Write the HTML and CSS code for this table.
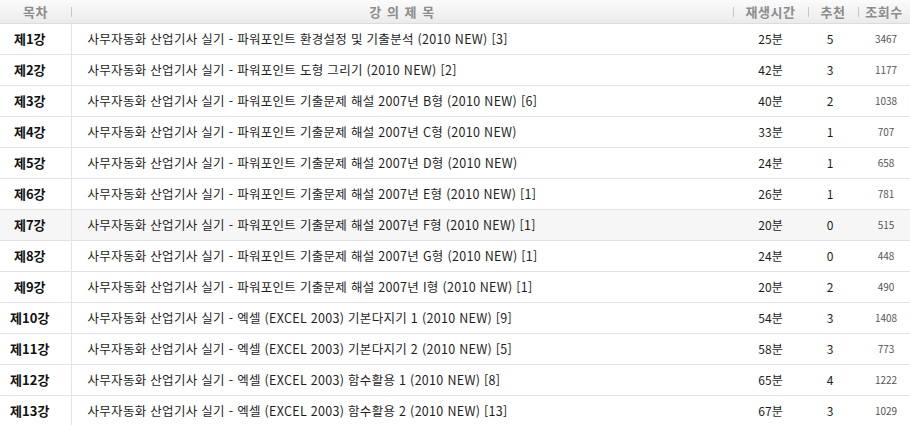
FILE: index.html
```html
<!DOCTYPE html>
<html lang="ko">
<head>
<meta charset="utf-8">
<link rel="stylesheet" href="styles.css">
</head>
<body>
<table class="list">
  <colgroup>
    <col class="c-no"><col class="c-title"><col class="c-time"><col class="c-rec"><col class="c-view">
  </colgroup>
  <thead>
    <tr>
      <th class="h-no">목차</th>
      <th class="h-sep">강 의 제 목</th>
      <th class="h-sep">재생시간</th>
      <th class="h-sep">추천</th>
      <th class="h-sep">조회수</th>
    </tr>
  </thead>
  <tbody>
    <tr><td class="no">제1강</td><td class="title">사무자동화 산업기사 실기 - 파워포인트 환경설정 및 기출분석 (2010 NEW) [3]</td><td class="time">25분</td><td class="rec">5</td><td class="view">3467</td></tr>
    <tr><td class="no">제2강</td><td class="title">사무자동화 산업기사 실기 - 파워포인트 도형 그리기 (2010 NEW) [2]</td><td class="time">42분</td><td class="rec">3</td><td class="view">1177</td></tr>
    <tr><td class="no">제3강</td><td class="title">사무자동화 산업기사 실기 - 파워포인트 기출문제 해설 2007년 B형 (2010 NEW) [6]</td><td class="time">40분</td><td class="rec">2</td><td class="view">1038</td></tr>
    <tr><td class="no">제4강</td><td class="title">사무자동화 산업기사 실기 - 파워포인트 기출문제 해설 2007년 C형 (2010 NEW)</td><td class="time">33분</td><td class="rec">1</td><td class="view">707</td></tr>
    <tr><td class="no">제5강</td><td class="title">사무자동화 산업기사 실기 - 파워포인트 기출문제 해설 2007년 D형 (2010 NEW)</td><td class="time">24분</td><td class="rec">1</td><td class="view">658</td></tr>
    <tr><td class="no">제6강</td><td class="title">사무자동화 산업기사 실기 - 파워포인트 기출문제 해설 2007년 E형 (2010 NEW) [1]</td><td class="time">26분</td><td class="rec">1</td><td class="view">781</td></tr>
    <tr class="hl"><td class="no">제7강</td><td class="title">사무자동화 산업기사 실기 - 파워포인트 기출문제 해설 2007년 F형 (2010 NEW) [1]</td><td class="time">20분</td><td class="rec">0</td><td class="view">515</td></tr>
    <tr><td class="no">제8강</td><td class="title">사무자동화 산업기사 실기 - 파워포인트 기출문제 해설 2007년 G형 (2010 NEW) [1]</td><td class="time">24분</td><td class="rec">0</td><td class="view">448</td></tr>
    <tr><td class="no">제9강</td><td class="title">사무자동화 산업기사 실기 - 파워포인트 기출문제 해설 2007년 I형 (2010 NEW) [1]</td><td class="time">20분</td><td class="rec">2</td><td class="view">490</td></tr>
    <tr><td class="no">제10강</td><td class="title">사무자동화 산업기사 실기 - 엑셀 (EXCEL 2003) 기본다지기 1 (2010 NEW) [9]</td><td class="time">54분</td><td class="rec">3</td><td class="view">1408</td></tr>
    <tr><td class="no">제11강</td><td class="title">사무자동화 산업기사 실기 - 엑셀 (EXCEL 2003) 기본다지기 2 (2010 NEW) [5]</td><td class="time">58분</td><td class="rec">3</td><td class="view">773</td></tr>
    <tr><td class="no">제12강</td><td class="title">사무자동화 산업기사 실기 - 엑셀 (EXCEL 2003) 함수활용 1 (2010 NEW) [8]</td><td class="time">65분</td><td class="rec">4</td><td class="view">1222</td></tr>
    <tr><td class="no">제13강</td><td class="title">사무자동화 산업기사 실기 - 엑셀 (EXCEL 2003) 함수활용 2 (2010 NEW) [13]</td><td class="time">67분</td><td class="rec">3</td><td class="view">1029</td></tr>
  </tbody>
</table>
</body>
</html>
```

FILE: styles.css
```css
html, body {
  margin: 0;
  padding: 0;
  background: #ffffff;
}
body {
  font-family: "Noto Sans CJK KR", "Noto Sans", sans-serif;
  color: #222;
}
.list {
  width: 910px;
  border-collapse: collapse;
  table-layout: fixed;
}
.c-no { width: 71px; }
.c-title { width: 662px; }
.c-time { width: 75px; }
.c-rec { width: 50px; }
.c-view { width: 52px; }

thead th {
  height: 23px;
  padding: 0;
  background: linear-gradient(#fbfbfb, #ebebeb);
  border-bottom: 1px solid #dcdcdc;
  color: #8c8c8c;
  font-size: 13px;
  font-weight: bold;
  text-align: center;
  line-height: 23px;
  position: relative;
  letter-spacing: 0.5px;
}
.h-sep::before {
  content: "";
  position: absolute;
  left: 0;
  top: 7px;
  width: 1px;
  height: 10px;
  background: #c8c8c8;
}
thead th.h-sep:nth-child(2) {
  word-spacing: 1px;
}
tbody td {
  height: 30px;
  padding: 0;
  border-bottom: 1px solid #e2e2e2;
  font-size: 12px;
  line-height: 30px;
  white-space: nowrap;
  overflow: hidden;
}
tbody tr.hl td {
  background: #f6f6f6;
}
td.no {
  border-right: 1px solid #e4e4e4;
  text-align: center;
  padding-right: 11px;
  font-weight: bold;
  font-size: 13px;
  color: #111;
}
td.title {
  padding-left: 16px;
  font-size: 12.5px;
  letter-spacing: 0.3px;
  color: #1e1e1e;
}
td.time {
  text-align: center;
  color: #1e1e1e;
}
td.rec {
  text-align: center;
  padding-right: 6px;
  color: #1e1e1e;
}
td.view {
  text-align: center;
  padding-left: 4px;
  font-size: 10px;
  color: #555;
}
```
